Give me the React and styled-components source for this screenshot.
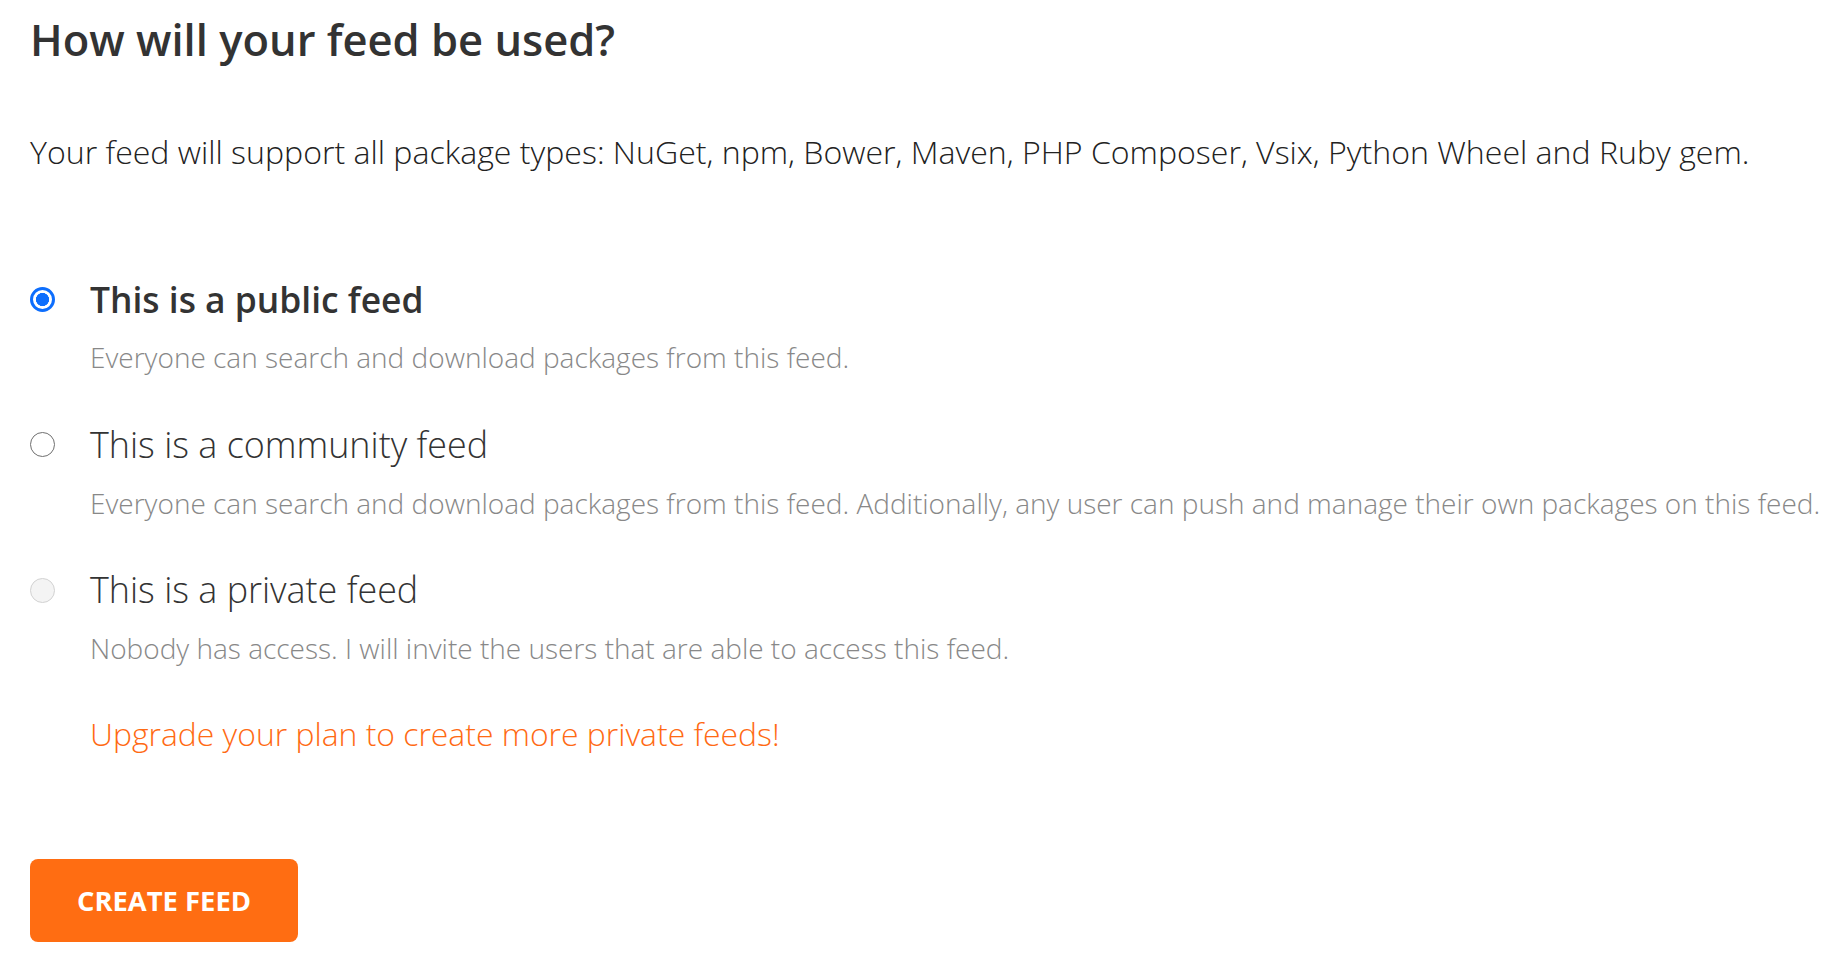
import React from 'react';
import styled, { createGlobalStyle, css } from 'styled-components';

const GlobalStyle = createGlobalStyle`
  body {
    margin: 0;
    background: #fff;
    font-family: "Open Sans", "Noto Sans", sans-serif;
    color: #333;
  }
`;

const Page = styled.main`
  padding: 14px 0 0 30px;
`;

const Title = styled.h1`
  margin: 0;
  font-size: 43.5px;
  font-weight: 600;
  line-height: 52px;
  color: #333;
`;

const Intro = styled.p`
  margin: 66px 0 0;
  font-size: 32.1px;
  font-weight: 300;
  line-height: 40px;
  color: #222;
`;

const OptionList = styled.div`
  display: flex;
  flex-direction: column;
  gap: 47.5px;
  margin-top: 105px;
`;

const Option = styled.label`
  display: grid;
  grid-template-columns: 60px 1fr;
  row-gap: 18px;
  align-items: center;
  cursor: ${({ $disabled }) => ($disabled ? 'default' : 'pointer')};
`;

const Radio = styled.input.attrs({ type: 'radio' })`
  appearance: none;
  margin: 0;
  width: 25px;
  height: 25px;
  border-radius: 50%;
  box-sizing: border-box;
  border: 1.6px solid #6f6f6f;
  background: #fff;

  ${({ checked }) =>
    checked &&
    css`
      border: 3px solid #0d6efd;
      background: radial-gradient(circle, #0d6efd 0 6.3px, #fff 6.8px);
    `}

  ${({ disabled }) =>
    disabled &&
    css`
      border-color: #d2d2d2;
      background: #f4f4f4;
    `}
`;

const OptionLabel = styled.span`
  font-size: ${({ $strong }) => ($strong ? '35.4px' : '35.9px')};
  font-weight: ${({ $strong }) => ($strong ? 600 : 300)};
  line-height: 44px;
  color: #333;
`;

const OptionDesc = styled.span`
  grid-column: 2;
  font-size: 28px;
  font-weight: 300;
  line-height: 36px;
  color: #888;
  white-space: nowrap;
`;

const UpgradeLink = styled.a`
  display: block;
  margin: 48px 0 0 60px;
  font-size: 31.9px;
  font-weight: 300;
  line-height: 40px;
  color: #ff6a13;
  text-decoration: none;
`;

const CreateButton = styled.button`
  display: flex;
  align-items: center;
  justify-content: center;
  margin-top: 105px;
  width: 268px;
  height: 83px;
  padding: 0;
  border: none;
  border-radius: 8px;
  background: #ff6d12;
  color: #fff;
  font-family: inherit;
  font-size: 27.4px;
  font-weight: 700;
  cursor: pointer;
`;

const options = [
  {
    id: 'public',
    label: 'This is a public feed',
    desc: 'Everyone can search and download packages from this feed.',
  },
  {
    id: 'community',
    label: 'This is a community feed',
    desc: 'Everyone can search and download packages from this feed. Additionally, any user can push and manage their own packages on this feed.',
  },
  {
    id: 'private',
    label: 'This is a private feed',
    desc: 'Nobody has access. I will invite the users that are able to access this feed.',
    disabled: true,
  },
];

function App() {
  const [feedType, setFeedType] = React.useState('public');

  return (
    <Page>
      <GlobalStyle />
      <Title>How will your feed be used?</Title>
      <Intro>
        Your feed will support all package types: NuGet, npm, Bower, Maven, PHP
        Composer, Vsix, Python Wheel and Ruby gem.
      </Intro>
      <OptionList>
        {options.map((opt) => (
          <Option key={opt.id} $disabled={opt.disabled}>
            <Radio
              name="feedType"
              value={opt.id}
              checked={feedType === opt.id}
              disabled={opt.disabled}
              onChange={() => setFeedType(opt.id)}
            />
            <OptionLabel $strong={feedType === opt.id}>{opt.label}</OptionLabel>
            <OptionDesc>{opt.desc}</OptionDesc>
          </Option>
        ))}
      </OptionList>
      <UpgradeLink href="#upgrade">
        Upgrade your plan to create more private feeds!
      </UpgradeLink>
      <CreateButton type="button">CREATE FEED</CreateButton>
    </Page>
  );
}

export default App;
